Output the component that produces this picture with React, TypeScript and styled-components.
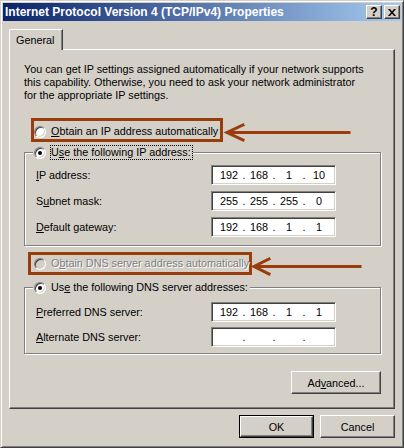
import React from "react";
import styled, { createGlobalStyle } from "styled-components";

const Global = createGlobalStyle`
  * { box-sizing: border-box; }
  html, body { margin: 0; padding: 0; background: #d4d0c8; }
  body {
    font-family: "Liberation Sans", Arial, sans-serif;
    font-size: 10.8px;
    color: #000;
  }
`;

const BROWN = "#993d0c";

const Window = styled.div`
  position: relative;
  width: 404px;
  height: 448px;
  background: #d4d0c8;
  border: 1px solid;
  border-color: #d4d0c8 #404040 #404040 #d4d0c8;
  box-shadow: inset 1px 1px #fff, inset -1px -1px #808080;
  padding: 2px;
  display: flex;
  flex-direction: column;
`;

const TitleBar = styled.div`
  height: 18px;
  flex: none;
  background: linear-gradient(to right, #0a246a, #a6caf0);
  display: flex;
  align-items: center;
  justify-content: space-between;
  padding: 0 1px 0 2px;
`;

const TitleText = styled.span`
  color: #fff;
  font-weight: bold;
  font-size: 12px;
  white-space: nowrap;
`;

const CaptionButtons = styled.div`
  display: flex;
  gap: 2px;
`;

const CaptionButton = styled.div`
  width: 16px;
  height: 14px;
  background: #d4d0c8;
  border: 1px solid;
  border-color: #fff #404040 #404040 #fff;
  box-shadow: inset -1px -1px #808080;
  display: flex;
  align-items: center;
  justify-content: center;
  font-weight: bold;
  font-size: 12px;
  line-height: 1;
  color: #000;
`;

const Content = styled.div`
  flex: 1;
  display: flex;
  flex-direction: column;
  padding: 8px 6px 7px 6px;
`;

const TabStrip = styled.div`
  display: flex;
  flex: none;
`;

const Tab = styled.div`
  position: relative;
  z-index: 1;
  width: 54px;
  height: 21px;
  margin-bottom: -1px;
  background: #d4d0c8;
  border-left: 1px solid #fff;
  border-top: 1px solid #fff;
  border-right: 1px solid #404040;
  border-top-left-radius: 2px;
  box-shadow: inset -1px 0 #808080;
  padding: 0 0 1px 6px;
  display: flex;
  align-items: center;
`;

const Panel = styled.div`
  height: 360px;
  flex: none;
  border: 1px solid;
  border-color: #fff #404040 #404040 #fff;
  box-shadow: inset -1px -1px #808080;
  padding: 13px 13px 0 14px;
  display: flex;
  flex-direction: column;
`;

const Intro = styled.p`
  margin: 0;
  line-height: 13px;
  white-space: nowrap;
`;

const Highlight = styled.div<{ $mt: number; $ml: number; $w: number; $pad: string }>`
  margin-top: ${(p) => p.$mt}px;
  margin-left: ${(p) => p.$ml}px;
  width: ${(p) => p.$w}px;
  border: 3px solid ${BROWN};
  padding: ${(p) => p.$pad};
`;

const RadioRow = styled.div`
  display: flex;
  align-items: center;
  height: 15px;
  gap: 4px;
`;

const RadioCircle = styled.span<{ $checked?: boolean; $disabled?: boolean }>`
  position: relative;
  flex: none;
  width: 12px;
  height: 12px;
  border-radius: 50%;
  border: 1px solid;
  border-color: #808080 #fff #fff #808080;
  background: ${(p) => (p.$disabled ? "#d4d0c8" : "#fff")};
  box-shadow: inset 1px 1px #404040, inset -1px -1px #d4d0c8;
  &::after {
    content: "";
    display: ${(p) => (p.$checked ? "block" : "none")};
    position: absolute;
    left: 3px;
    top: 3px;
    width: 4px;
    height: 4px;
    border-radius: 50%;
    background: #000;
  }
`;

const RadioLabel = styled.span<{ $focus?: boolean; $disabled?: boolean }>`
  border: 1px ${(p) => (p.$focus ? "dotted #000" : "solid transparent")};
  padding: 0 1px 0 0;
  line-height: 13px;
  white-space: nowrap;
  color: ${(p) => (p.$disabled ? "#808080" : "#000")};
  text-shadow: ${(p) => (p.$disabled ? "1px 1px #fff" : "none")};
`;

const GroupBox = styled.div<{ $mt: number; $h: number }>`
  margin-top: ${(p) => p.$mt}px;
  height: ${(p) => p.$h}px;
  border: 1px solid #808080;
  box-shadow: inset 1px 1px #fff, 1px 1px #fff;
  display: flex;
  flex-direction: column;
`;

const Legend = styled.div`
  margin: -8px 0 0 8px;
  width: fit-content;
  background: #d4d0c8;
  padding: 0 0 0 1px;
`;

const FieldRows = styled.div<{ $mt: number; $gap: number }>`
  margin-top: ${(p) => p.$mt}px;
  padding: 0 44px 0 11px;
  display: flex;
  flex-direction: column;
  gap: ${(p) => p.$gap}px;
`;

const FieldRow = styled.div`
  display: flex;
  align-items: center;
  justify-content: space-between;
  height: 20px;
`;

const IPBox = styled.div`
  width: 125px;
  height: 20px;
  background: #fff;
  border: 1px solid;
  border-color: #808080 #fff #fff #808080;
  box-shadow: inset 1px 1px #404040, inset -1px -1px #d4d0c8;
  display: flex;
  align-items: center;
  padding-left: 5px;
`;

const Octet = styled.span`
  width: 24px;
  text-align: center;
`;

const Dot = styled.span`
  width: 6px;
  text-align: center;
`;

const Button = styled.div<{ $default?: boolean; $w: number }>`
  width: ${(p) => p.$w}px;
  height: 23px;
  background: #d4d0c8;
  border: 1px solid ${(p) => (p.$default ? "#000" : "transparent")};
  display: flex;
  flex: none;
`;

const ButtonFace = styled.div<{ $default?: boolean }>`
  flex: 1;
  display: flex;
  align-items: center;
  justify-content: center;
  border: 1px solid;
  border-color: #fff #404040 #404040 #fff;
  box-shadow: inset -1px -1px #808080;
  ${(p) => (p.$default ? "" : "margin: -1px;")}
`;

const AdvancedWrap = styled.div`
  margin-top: 17px;
  align-self: flex-end;
`;

const ButtonRow = styled.div`
  margin-top: 6px;
  display: flex;
  justify-content: flex-end;
  gap: 6px;
`;

const Annotations = styled.svg`
  position: absolute;
  left: 0;
  top: 0;
  pointer-events: none;
`;

const IP: React.FC<{ parts: string[] }> = ({ parts }) => (
  <IPBox>
    {parts.map((p, i) => (
      <React.Fragment key={i}>
        <Octet>{p}</Octet>
        {i < 3 && <Dot>.</Dot>}
      </React.Fragment>
    ))}
  </IPBox>
);

export default function App() {
  return (
    <>
      <Global />
      <Window>
        <TitleBar>
          <TitleText>Internet Protocol Version 4 (TCP/IPv4) Properties</TitleText>
          <CaptionButtons>
            <CaptionButton>?</CaptionButton>
            <CaptionButton>
              <svg width="8" height="7" viewBox="0 0 8 7">
                <path d="M0 0h2l2 2.5L6 0h2L5 3.5 8 7H6L4 4.5 2 7H0l3-3.5z" fill="#000" />
              </svg>
            </CaptionButton>
          </CaptionButtons>
        </TitleBar>
        <Content>
          <TabStrip>
            <Tab>General</Tab>
          </TabStrip>
          <Panel>
            <Intro>
              You can get IP settings assigned automatically if your network supports
              <br />
              this capability. Otherwise, you need to ask your network administrator
              <br />
              for the appropriate IP settings.
            </Intro>

            <Highlight $mt={16} $ml={7} $w={192} $pad="3px 0 0 0">
              <RadioRow>
                <RadioCircle />
                <RadioLabel>
                  <u>O</u>btain an IP address automatically
                </RadioLabel>
              </RadioRow>
            </Highlight>

            <GroupBox $mt={10} $h={94}>
              <Legend>
                <RadioRow>
                  <RadioCircle $checked />
                  <RadioLabel $focus>
                    U<u>s</u>e the following IP address:
                  </RadioLabel>
                </RadioRow>
              </Legend>
              <FieldRows $mt={5} $gap={6}>
                <FieldRow>
                  <span>
                    <u>I</u>P address:
                  </span>
                  <IP parts={["192", "168", "1", "10"]} />
                </FieldRow>
                <FieldRow>
                  <span>
                    S<u>u</u>bnet mask:
                  </span>
                  <IP parts={["255", "255", "255", "0"]} />
                </FieldRow>
                <FieldRow>
                  <span>
                    <u>D</u>efault gateway:
                  </span>
                  <IP parts={["192", "168", "1", "1"]} />
                </FieldRow>
              </FieldRows>
            </GroupBox>

            <Highlight $mt={6} $ml={4} $w={224} $pad="1px 0 1px 3px">
              <RadioRow>
                <RadioCircle $disabled />
                <RadioLabel $disabled>
                  O<u>b</u>tain DNS server address automatically
                </RadioLabel>
              </RadioRow>
            </Highlight>

            <GroupBox $mt={12} $h={67}>
              <Legend>
                <RadioRow>
                  <RadioCircle $checked />
                  <RadioLabel>
                    Us<u>e</u> the following DNS server addresses:
                  </RadioLabel>
                </RadioRow>
              </Legend>
              <FieldRows $mt={7} $gap={5}>
                <FieldRow>
                  <span>
                    <u>P</u>referred DNS server:
                  </span>
                  <IP parts={["192", "168", "1", "1"]} />
                </FieldRow>
                <FieldRow>
                  <span>
                    <u>A</u>lternate DNS server:
                  </span>
                  <IP parts={["", "", "", ""]} />
                </FieldRow>
              </FieldRows>
            </GroupBox>

            <AdvancedWrap>
              <Button $w={90}>
                <ButtonFace>
                  Ad<u>v</u>anced...
                </ButtonFace>
              </Button>
            </AdvancedWrap>
          </Panel>
          <ButtonRow>
            <Button $default $w={75}>
              <ButtonFace $default>OK</ButtonFace>
            </Button>
            <Button $w={75}>
              <ButtonFace>Cancel</ButtonFace>
            </Button>
          </ButtonRow>
        </Content>
        <Annotations width="404" height="448" viewBox="0 0 404 448">
          <g stroke={BROWN} strokeWidth="3" fill="none" strokeLinecap="square">
            <line x1="228" y1="131.5" x2="348" y2="131.5" />
            <polyline points="242,124 226,131.5 242,139" strokeLinejoin="miter" />
            <line x1="255" y1="265.5" x2="359" y2="265.5" />
            <polyline points="268,258 253,265.5 268,273" strokeLinejoin="miter" />
          </g>
        </Annotations>
      </Window>
    </>
  );
}
